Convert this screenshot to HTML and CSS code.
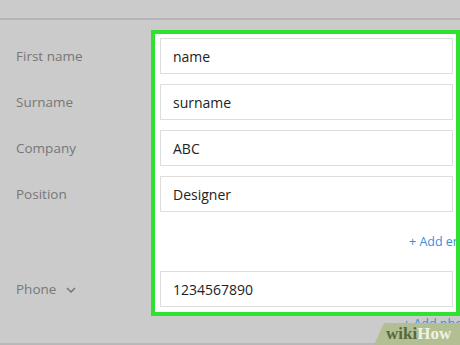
FILE: index.html
```html
<!DOCTYPE html>
<html lang="en">
<head>
    <meta charset="UTF-8">
    <meta name="viewport" content="width=device-width, initial-scale=1.0">
    <title>Contact</title>
    <link rel="stylesheet" href="styles.css">
</head>

<body>
    <div class="topbar"></div>

    <div class="form">
        <div class="labels">
            <div class="label">First name</div>
            <div class="label">Surname</div>
            <div class="label">Company</div>
            <div class="label">Position</div>
            <div class="label-spacer"></div>
            <div class="label">Phone
                <svg class="chevron" width="10" height="6" viewBox="0 0 10 6">
                    <path d="M1 1 L5 5 L9 1" fill="none" stroke="#7a7a7a" stroke-width="1.6"/>
                </svg>
            </div>
        </div>

        <div class="box">
            <div class="field">name</div>
            <div class="field">surname</div>
            <div class="field">ABC</div>
            <div class="field">Designer</div>
            <div class="add-row"><span class="add-link">+ Add email</span></div>
            <div class="field">1234567890</div>
        </div>
    </div>

    <div class="below">
        <span class="add-link">+ Add phone</span>
    </div>

    <div class="bottombar"></div>

    <!-- watermark -->
    <div class="watermark"><span class="wiki">wiki</span><span class="how">How</span></div>
</body>
</html>
```

FILE: styles.css
```css
body {
    margin: 0;
    width: 460px;
    height: 345px;
    overflow: hidden;
    background-color: #cbcbcb;
    font-family: "Open Sans", "Noto Sans", sans-serif;
    position: relative;
}

.topbar {
    height: 18px;
    border-bottom: 2px solid #b6b6b6;
}

.form {
    display: flex;
    padding-top: 10px;
}

.labels {
    flex: none;
    width: 151px;
    padding-top: 8px;
    display: flex;
    flex-direction: column;
    gap: 10px;
}

.label {
    height: 36px;
    padding-left: 16px;
    display: flex;
    align-items: center;
    font-size: 13.5px;
    color: #777777;
}

.label-spacer {
    height: 39px;
}

.chevron {
    margin-left: 10px;
    margin-top: 2px;
}

/* 초록 테두리 박스 */
.box {
    flex: none;
    width: 296px;
    border: 4px solid #2fe22f;
    background: #ffffff;
    padding: 4px 0 5px 5px;
    display: flex;
    flex-direction: column;
    gap: 10px;
}

.field {
    width: 279px;
    height: 34px;
    border: 1px solid #dedede;
    padding-left: 12px;
    display: flex;
    align-items: center;
    font-size: 14px;
    color: #222222;
    white-space: nowrap;
}

.add-row {
    height: 39px;
    display: flex;
    align-items: center;
    padding-left: 249px;
    white-space: nowrap;
    overflow: hidden;
}

.add-link {
    font-size: 12.5px;
    color: #3a8fd8;
    white-space: nowrap;
}

.below {
    height: 27px;
    padding-left: 403px;
    display: flex;
    align-items: flex-start;
    overflow: hidden;
    white-space: nowrap;
    line-height: 16px;
}

.bottombar {
    border-bottom: 2px solid #b8b8b8;
}

.watermark {
    position: absolute;
    right: 0;
    bottom: 0;
    width: 86px;
    height: 22px;
    background: #b2bf92;
    clip-path: polygon(10px 0, 100% 0, 100% 100%, 0 100%);
    font-family: "Liberation Serif", serif;
    font-weight: bold;
    font-size: 17px;
    line-height: 22px;
    padding-left: 12px;
    box-sizing: border-box;
}

.wiki {
    color: #58683a;
}

.how {
    color: #eef2e6;
}
```
